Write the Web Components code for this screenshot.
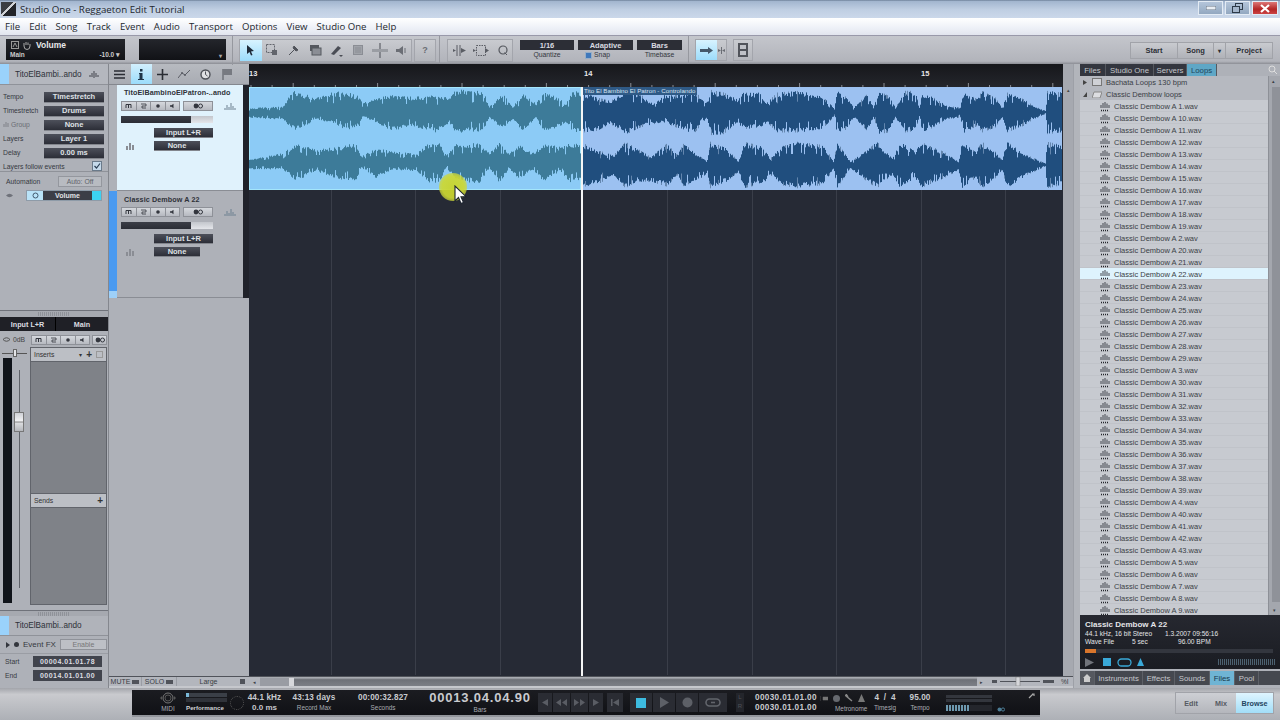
<!DOCTYPE html>
<html><head><meta charset="utf-8"><style>
html,body{margin:0;padding:0;width:1280px;height:720px;overflow:hidden;background:#aeb1b8;font-family:"Liberation Sans",sans-serif}
so-app{display:flex}
</style></head><body>
<so-app></so-app>
<script>
const F="'Liberation Sans',Arial,sans-serif", OS="'Open Sans','Liberation Sans',sans-serif";
function def(name,css,html,init){
  customElements.define(name,class extends HTMLElement{
    constructor(){super();const r=this.attachShadow({mode:'open'});
      r.innerHTML='<style>'+css+'</style>'+(typeof html==='function'?html(this):html);}
    connectedCallback(){if(init&&!this._i){this._i=1;init(this)}}
  });
}
const svg=(w,h,b,s='')=>`<svg width="${w}" height="${h}" viewBox="0 0 ${w} ${h}" style="display:block;flex:none;${s}">${b}</svg>`;

def('so-btn',`:host{display:flex;align-items:center;justify-content:center;height:var(--h,11px);width:var(--w,60px);background:linear-gradient(#4d505a,#2c2e37);color:#dfe1e6;font:bold 7.5px ${F};flex:none;box-sizing:border-box;border-bottom:1px solid #83868d}`,`<slot></slot>`);
const strip=()=>`<so-strip></so-strip>`;
def('so-strip',`:host{display:flex;height:10px;width:92px;flex:none;gap:0}
:host([mix]){width:76px}
div{box-sizing:border-box;border:1px solid #8e9198;background:linear-gradient(#d5d8dd,#b6b9c0);height:10px;width:15.5px;display:flex;align-items:center;justify-content:center;margin-right:-1px}
div.w{width:30px;margin-left:4px}
:host([mix]) div.w{width:15px;margin-left:3px}`,
`<div>${svg(7,6,'<path d="M1 5V1.5H6V5M3.5 1.5V5" fill="none" stroke="#33363e"/>')}</div>
<div>${svg(7,6,'<path d="M1 1H6V3H2V5H6" fill="none" stroke="#33363e" stroke-width=".8"/>')}</div>
<div>${svg(6,6,'<circle cx="3" cy="3" r="1.8" fill="#33363e"/>')}</div>
<div>${svg(7,6,'<path d="M1 2.2H2.5L4.5 .8V5.2L2.5 3.8H1Z" fill="#33363e"/>')}</div>
<div class="w">${svg(12,6,'<circle cx="4" cy="3" r="2.4" fill="#33363e"/><circle cx="8.5" cy="3" r="2" fill="none" stroke="#33363e"/>')}</div>`);

def('so-title',`:host{display:flex;align-items:center;height:18px;flex:none;background:linear-gradient(#6d8098 0,#a3b6cf 8%,#c0cfe3 55%,#cbd8ea);font:9.75px ${OS};color:#23272e;position:relative}
.l{width:15px;height:14px;margin:0 4px 0 1px;background:linear-gradient(135deg,#3a3d42 0 42%,#cfd2d6 42% 52%,#23252a 52%)}
.w{margin-left:auto;display:flex;gap:2px;margin-right:2px;height:15px;align-self:flex-start;padding-top:1px}
.w div{height:14px;width:25px;display:flex;align-items:center;justify-content:center;box-sizing:border-box;border:1px solid #e3ebf4}
`,`<div class="l"></div><span>Studio One - Reggaeton Edit Tutorial</span>
<div class="w"><div style="background:linear-gradient(#b4c5da,#93a8c0)">${svg(10,4,'<rect x="0" y="0" width="10" height="4" fill="#e8edf3" stroke="#6a7686"/>')}</div>
<div style="background:linear-gradient(#b4c5da,#93a8c0)">${svg(11,10,'<rect x="3.5" y=".5" width="7" height="6" fill="none" stroke="#2e3a48"/><rect x=".5" y="3.5" width="7" height="6" fill="#a5b6cb" stroke="#2e3a48"/>')}</div>
<div style="width:26px;background:linear-gradient(#d77,#b32626 60%,#c44)">${svg(10,9,'<path d="M1 1L9 8M9 1L1 8" stroke="#fff" stroke-width="2.2"/>')}</div></div>`);

def('so-menu',`:host{display:flex;align-items:center;height:17px;flex:none;background:linear-gradient(#fff,#edf0f7 60%,#e2e5ee);font:9.6px ${OS};color:#23272e;padding-left:5px;gap:9.1px;box-sizing:border-box}`,
 ['File','Edit','Song','Track','Event','Audio','Transport','Options','View','Studio One','Help'].map(t=>`<span>${t}</span>`).join(''));

const tool=(b,a='')=>`<div class="t ${a}">${b}</div>`;
def('so-toolbar',`:host{display:flex;align-items:center;height:29px;flex:none;background:linear-gradient(#c4c6cc,#b2b4bb 90%,#8b8d94);box-sizing:border-box;border-top:1px solid #99a;position:relative}
.d{background:linear-gradient(#24262c,#111216);height:21px;box-sizing:border-box;color:#e8e8ea;font:bold 7px ${F};flex:none;position:relative}
.t{width:21.5px;height:21px;display:flex;align-items:center;justify-content:center;flex:none}
.on{background:linear-gradient(#d8f3ff,#9cdcfb)}
.g{display:flex;height:23px;border:1px solid #a3a5ac;box-sizing:border-box;align-items:center;background:linear-gradient(#c9cbd0,#b4b6bc);flex:none}
.sp{width:1px;height:29px;background:#96989f;flex:none}
.q{display:flex;flex-direction:column;align-items:center;flex:none;gap:1px;margin-top:-1px}
.q b{display:flex;align-items:center;justify-content:center;height:10px;background:#2c2e36;color:#d8dae0;font:bold 7.5px ${F};box-sizing:border-box}
.q span{font:6.8px ${F};color:#33363d;height:8px;line-height:8px}
.sw{margin-left:auto;margin-right:7px;display:flex;height:17px;width:143px;background:linear-gradient(#c9cbd0,#b0b2b8);border:1px solid #a1a3a9;box-sizing:border-box;font:bold 7.5px ${F};color:#2c2f36;flex:none}
.sw div{display:flex;align-items:center;justify-content:center;border-right:1px solid #a1a3a9;box-sizing:border-box}
`,`
<div class="d" style="margin-left:6px;width:119px;margin-top:-1px"><div style="display:flex;align-items:center;height:12px;padding-left:5px;gap:3px">
 ${svg(8,8,'<rect x=".5" y=".5" width="7" height="7" fill="none" stroke="#999"/><path d="M2 6L4 2L6 6" fill="none" stroke="#999"/>')}
 ${svg(9,9,'<path d="M2 5V2M4 4V1M6 4V1.5M8 5V3M2 5Q2 8.5 5 8.5Q8 8.5 8 5" fill="none" stroke="#aaa"/>')}
 <span style="font-size:8.5px;margin-left:2px">Volume</span></div>
 <div style="display:flex;justify-content:space-between;padding:0 5px 0 4px;font-size:6.5px;color:#ccc"><span>Main</span><span>-10.0 ▾</span></div></div>
<div class="d" style="margin-left:14px;width:87px;margin-top:-1px"><span style="position:absolute;right:4px;bottom:1px;font-size:6px;color:#aaa">▾</span></div>
<div class="sp" style="margin-left:6px"></div>
<div class="g" style="margin-left:6px;width:173px;padding-right:1px">
 ${tool(svg(9,12,'<path d="M1 1L8 7L5 7.5L6.5 11L5 11.5L3.5 8L1 10Z" fill="#1f2a38"/>'),'on')}
 ${tool(svg(12,12,'<rect x=".5" y=".5" width="8" height="8" fill="none" stroke="#62656c" stroke-dasharray="2 1"/><rect x="6" y="6" width="5" height="5" fill="#62656c"/>'))}
 ${tool(svg(12,12,'<path d="M1 11L7 5M6 2L10 6L8 7L5 4Z" stroke="#50535a" fill="#50535a"/>'))}
 ${tool(svg(13,12,'<rect x="1" y="1" width="9" height="6" fill="#55585f"/><rect x="3" y="4" width="9" height="7" fill="#8b8e95" stroke="#55585f"/>'))}
 ${tool(svg(13,13,'<path d="M1 10L8 2L11 4L4 11Z" fill="#4a4d55"/><path d="M9 11L11 13L13 11Z" fill="#4a4d55"/>'))}
 ${tool(svg(10,10,'<rect x=".5" y=".5" width="9" height="9" fill="#a0a3a9" stroke="#8a8d94"/><path d="M2 3H8M2 5H8M2 7H8" stroke="#8a8d94"/>'))}
 ${tool(svg(16,15,'<path d="M8 0V15" stroke="#70737a" stroke-width="1.5"/><path d="M0 6H16V9H0Z" fill="#9a9da3"/>'))}
 ${tool(svg(11,11,'<path d="M0 4H3L7 1V10L3 7H0Z" fill="#6b6e75"/><path d="M9 3V8" stroke="#6b6e75"/>'))}
</div>
<div class="g" style="margin-left:2px;width:22px;justify-content:center;font:bold 9px ${F};color:#6a6d74">?</div>
<div class="sp" style="margin-left:3px"></div>
<div class="g" style="margin-left:7px;width:66px;padding-left:1px">
 ${tool(svg(14,11,'<path d="M4 0V11M7 0V11" stroke="#5a5d64"/><path d="M0 4L3 5.5L0 7ZM8 3L13 5.5L8 8Z" fill="#5a5d64"/>'))}
 ${tool(svg(16,11,'<rect x="3.5" y=".5" width="9" height="10" fill="none" stroke="#5a5d64" stroke-dasharray="1.5 1"/><path d="M0 4L3 5.5L0 7ZM12 3L16 5.5L12 8Z" fill="#5a5d64"/>'))}
 ${tool(svg(10,11,'<circle cx="5" cy="5" r="4" fill="none" stroke="#54575e" stroke-width="1.2"/><path d="M6.5 7.5L9 10" stroke="#54575e"/>'))}
</div>
<div class="q" style="margin-left:7px;width:54px"><b style="width:54px">1/16</b><span>Quantize</span></div>
<div class="q" style="margin-left:4px;width:55px"><b style="width:55px">Adaptive</b><span style="display:flex;align-items:center;gap:2px;margin-right:16px"><i style="display:block;width:7px;height:7px;background:#3f78bb;border:1px solid #96aec8;box-sizing:border-box"></i>Snap</span></div>
<div class="q" style="margin-left:4px;width:45px"><b style="width:45px">Bars</b><span>Timebase</span></div>
<div class="sp" style="margin-left:6px"></div>
<div class="g" style="margin-left:6px;width:32px;height:22px">
 <div style="width:21px;height:20px;background:linear-gradient(#d8f3ff,#9cdcfb);display:flex;align-items:center;justify-content:center">${svg(13,7,'<path d="M0 2H8V0L13 3.5L8 7V5H0Z" fill="#44586a"/>')}</div>
 <div style="flex:1;display:flex;justify-content:center">${svg(7,7,'<path d="M3.5 0V7" stroke="#6a6d74"/><path d="M0 2L3 3.5L0 5ZM7 2L4 3.5L7 5Z" fill="#6a6d74"/>')}</div></div>
<div class="g" style="margin-left:6px;width:20px;height:22px;justify-content:center">${svg(10,14,'<path d="M0 0H10V14H0Z" fill="#50535a"/><rect x="2" y="2" width="6" height="4" fill="#bfc1c7"/><rect x="2" y="8" width="6" height="4" fill="#bfc1c7"/>')}</div>
<div class="sw"><div style="width:47px">Start</div><div style="width:36px">Song</div><div style="width:12px;font-size:6px">▾</div><div style="flex:1;border:0">Project</div></div>
`);

def('so-inspector',`:host{display:flex;flex-direction:column;width:109px;height:624px;flex:none;background:#aeb1b8;box-sizing:border-box;border-right:1px solid #84878e;font:7px ${F};color:#363941;overflow:hidden}
.hd{height:21px;display:flex;align-items:center;background:#b4b7be;flex:none;font:8.2px ${F};color:#2e3138;border-bottom:1px solid #8f9299;box-sizing:border-box}
.hd i{display:block;width:9px;align-self:stretch;background:#9ad2fb;margin-right:6px}
.r{display:flex;align-items:center;justify-content:space-between;height:14px;padding:0 4px 0 3px;flex:none;font-size:6.8px}
.rs{padding:5px 0 0;flex:none;height:87px;box-sizing:border-box;border-bottom:1px solid #8f9299}
.rs .r>span:first-child{margin-top:-2px}
.auto{height:31px;flex:none;display:flex;flex-direction:column;padding-top:2px;box-sizing:border-box}
.sp{flex:none;height:6px;background:#a6a9b0;border-top:1px solid #6f727a;box-sizing:border-box;background-image:repeating-linear-gradient(90deg,#8f9299 0 1px,transparent 1px 2px);background-size:32px 4px;background-repeat:no-repeat;background-position:38px 1px}
.mh{display:flex;height:14px;flex:none;background:#1f2026;color:#dcdde1;font:bold 7.2px ${F}}
.mh div{display:flex;align-items:center;justify-content:center}
.mx{height:279px;flex:none;display:flex;padding-top:4px;box-sizing:border-box}
.ins{width:77px;height:258px;margin-top:2px;background:#7f8288;border:1px solid #61646b;box-sizing:border-box;display:flex;flex-direction:column}
.ih{height:13px;flex:none;background:#bcbfc5;display:flex;align-items:center;padding:0 3px;border-bottom:1px solid #61646b;font-size:6.8px;color:#333}
.fld{display:flex;width:69px;height:11px;background:#41444d;color:#dcdde1;font:bold 7px ${F};align-items:center;justify-content:center;letter-spacing:.45px;margin-right:2px}
`,()=>`
<div class="hd"><i></i>TitoElBambi..ando<span style="margin-left:auto;margin-right:9px">${svg(10,7,'<path d="M1 4V6M3 2V6M5 0V7M7 2V6M9 4V6" stroke="#42454c"/>')}</span></div>
<div class="rs">
 <div class="r"><span>Tempo</span><so-btn>Timestretch</so-btn></div>
 <div class="r"><span>Timestretch</span><so-btn>Drums</so-btn></div>
 <div class="r"><span style="color:#6a6d74;display:flex;align-items:center;gap:2px">${svg(6,5,'<path d="M1 2V5M3 0V5M5 1V5" stroke="#8a8d94" stroke-width="1.3"/>')}Group</span><so-btn>None</so-btn></div>
 <div class="r"><span>Layers</span><so-btn>Layer 1</so-btn></div>
 <div class="r"><span>Delay</span><so-btn>0.00 ms</so-btn></div>
 <div class="r" style="padding-right:6px;margin-top:-1px"><span style="margin-top:0">Layers follow events</span><span style="display:block;width:10px;height:10px;background:#c5d9ea;border:1px solid #6a7a8a;box-sizing:border-box">${svg(8,8,'<path d="M1.5 4L3.5 6L7 1.5" fill="none" stroke="#2b3f55" stroke-width="1.2"/>')}</span></div>
</div>
<div class="auto">
 <div class="r" style="padding:0 6px 0 6px"><span>Automation</span><span style="display:flex;width:44px;height:11px;align-items:center;justify-content:center;border:1px solid #94979e;background:#b8bbc1;box-sizing:border-box;color:#60636a">Auto: Off</span></div>
 <div style="display:flex;align-items:center;margin-top:2px;padding-left:6px;height:11px">
  ${svg(7,5,'<path d="M0 2.5Q3.5 -1 7 2.5Q3.5 6 0 2.5Z" fill="#6f727a"/>')}
  <span style="display:flex;margin-left:13px;width:76px;height:11px;border:1px solid #8e9ba8;box-sizing:border-box">
   <i style="display:flex;align-items:center;justify-content:center;width:16px;background:#b9e3f8">${svg(7,7,'<circle cx="3.5" cy="3.5" r="2.5" fill="none" stroke="#41596d"/>')}</i>
   <b style="flex:1;background:#3b3e47;color:#e1e3e7;text-align:center;font-size:7px;line-height:9px">Volume</b>
   <i style="width:9px;background:#3cd2f2"></i></span></div>
</div>
<div style="flex:1"></div>
<div class="sp" style="height:7px"></div>
<div class="mh"><div style="width:55px;border-right:1px solid #000">Input L+R</div><div style="flex:1">Main</div></div>
<div class="mx">
 <div style="width:31px;flex:none;display:flex;flex-direction:column;padding-left:2px;box-sizing:border-box">
  <div style="display:flex;align-items:center;gap:3px;height:8px;font-size:6.8px;color:#444;padding-left:1px">${svg(7,5,'<path d="M0 2.5Q3.5 -1 7 2.5Q3.5 6 0 2.5Z" fill="none" stroke="#555"/>')}<span>0dB</span></div>
  <div style="height:1px;width:25px;background:#555;margin:10px 0 0 0;position:relative"><i style="position:absolute;left:11px;top:-4px;width:4px;height:8px;background:#e4e5e8;border:1px solid #666;box-sizing:border-box"></i></div>
  <div style="display:flex;margin-top:4px;height:245px">
   <div style="width:9px;background:#10141a;margin-left:1px"></div>
   <div style="width:7px"></div>
   <div style="width:1px;background:#5e6168;height:218px;margin-top:12px;position:relative"><i style="position:absolute;left:-5px;top:42px;width:10px;height:20px;background:linear-gradient(#cfd1d6,#f2f2f4 45%,#777 50%,#dcdde0 55%,#b4b6bb);border:1px solid #777;box-sizing:border-box"></i></div>
  </div>
 </div>
 <div style="width:77px;flex:none;margin-left:-1px">
  <so-strip mix style="margin-left:1px"></so-strip>
  <div class="ins"><div class="ih"><span>Inserts</span><span style="margin-left:auto;font-size:6px">▾</span><b style="margin-left:4px;font-size:10px;line-height:8px">+</b><span style="margin-left:4px;width:5px;height:5px;border:1px solid #999"></span></div>
   <div style="height:131px;flex:none"></div>
   <div class="ih" style="border-top:1px solid #61646b;height:13px"><span>Sends</span><b style="margin-left:auto;font-size:10px;line-height:8px">+</b></div>
  </div>
 </div>
</div>
<div class="sp"></div>
<div class="hd" style="height:20px;background:#b0b3ba"><i></i>TitoElBambi..ando</div>
<div style="height:18px;display:flex;align-items:center;padding-left:6px;font:8px ${F};flex:none;border-bottom:1px solid #9a9da4;box-sizing:border-box">
 ${svg(4,6,'<path d="M0 0L4 3L0 6Z" fill="#33363d"/>')}
 <span style="display:block;width:5px;height:5px;border-radius:50%;background:#33363d;margin:0 4px"></span>Event FX
 <span style="display:flex;width:47px;height:11px;align-items:center;justify-content:center;border:1px solid #8f9299;box-sizing:border-box;margin-left:4px;font-size:7px;color:#777;background:#bdc0c6">Enable</span></div>
<div class="r"><span style="padding-left:2px">Start</span><span class="fld">00004.01.01.78</span></div>
<div class="r"><span style="padding-left:2px">End</span><span class="fld">00014.01.01.00</span></div>
<div style="height:6px;flex:none"></div>
`);

def('so-track',`:host{display:flex;flex-direction:column;height:106px;box-sizing:border-box;padding:var(--pt,4px) 0 0 4px;font:bold 7.2px ${F};color:#2f3239;background:var(--bg,#aeb1b8);border-bottom:1px solid #8a8d94}
.m{height:7px;margin:5px 0 5px 0;width:92px;background:linear-gradient(#c3c6cc,#e4e6ea);position:relative}
.m i{display:block;height:100%;width:70px;background:linear-gradient(#3b3e47,#2b2d35)}
`,t=>`<div style="height:9px;padding-left:3px;letter-spacing:.1px"><slot></slot></div>
<div style="display:flex;align-items:center;margin-top:var(--sm,3px);width:115px;justify-content:space-between">${strip()}${svg(12,9,'<path d="M1 6V8M3 3V8M5 5V8M7 1V8M9 4V8M11 6V8" stroke="#6d8090"/>')}</div>
<div class="m"><i></i></div>
<div style="margin-left:33px"><so-btn style="--w:59px;--h:10px">Input L+R</so-btn></div>
<div style="display:flex;align-items:center;margin-top:3px">
  ${svg(8,8,'<path d="M1 4V8M4 1V8M7 3V8" stroke="#8a8d94" stroke-width="2"/>',"margin:0 20px 0 5px")}
  <so-btn style="--w:46px;--h:10px">None</so-btn></div>`);

def('so-tracklist',`:host{display:flex;flex-direction:column;width:140px;flex:none;background:#aeb1b8;box-sizing:border-box}
.h{height:21px;flex:none;display:flex;align-items:center;background:linear-gradient(#b7bac0,#a9acb3);border-bottom:1px solid #84878e;box-sizing:border-box}
.h div{width:21.5px;height:100%;display:flex;align-items:center;justify-content:center;flex:none}
.b{display:flex;flex-direction:column;height:213px;flex:none}
.row{display:flex;flex:none}
.c{width:8px;flex:none}.e{width:6px;background:#20222a;flex:none}
`,`<div class="h">
 <div>${svg(11,9,'<path d="M0 1H11M0 4.5H11M0 8H11" stroke="#2a2d34" stroke-width="1.3"/>')}</div>
 <div style="background:linear-gradient(#d2effd,#9bdcfb)">${svg(6,11,'<rect x="2" y="0" width="2.5" height="2.5" fill="#1f3548"/><path d="M1 4H4.5V10H6V11H0V10H1.5V5H1Z" fill="#1f3548"/>')}</div>
 <div>${svg(11,11,'<path d="M5.5 0V11M0 5.5H11" stroke="#2a2d34" stroke-width="1.6"/>')}</div>
 <div>${svg(13,11,'<path d="M0 9L4 4L7 6L12 1" fill="none" stroke="#5a5d64"/><circle cx="4" cy="4" r="1" fill="#5a5d64"/><circle cx="7" cy="6" r="1" fill="#5a5d64"/>')}</div>
 <div>${svg(11,11,'<circle cx="5.5" cy="5.5" r="4.5" fill="#dfe0e3" stroke="#4d5057" stroke-width="1.4"/><path d="M5.5 2.5V5.5L7.5 7" stroke="#4d5057" fill="none"/>')}</div>
 <div>${svg(10,11,'<path d="M1 0V11" stroke="#6b6e75" stroke-width="1.4"/><rect x="1" y="0" width="9" height="6" fill="#777a81"/>')}</div>
</div>
<div class="b">
 <div class="row" style="height:106px"><div class="c" style="background:#aeb1b8"></div><so-track style="--bg:#e0f2fc;--pt:3px;--sm:4px;width:126px">TitoElBambinoElPatron-..ando</so-track><div class="e"></div></div>
 <div class="row" style="height:107px"><div class="c" style="background:#4a9af0;display:flex;align-items:flex-end"><span style="display:block;width:8px;height:7px;background:#9ed0f8"></span></div><so-track style="width:126px;height:107px">Classic Dembow A 22</so-track><div class="e"></div></div>
</div>`);

def('so-wave',`:host{display:block;height:103px;overflow:hidden}svg{display:block}`,'<span id="o"></span>',el=>{
  const w=+el.getAttribute('w'),off=+el.getAttribute('off')||0,cs=el.getAttribute('cs').split(' ').map(Number);
  const chans=el.getAttribute('env').split('|').map(c=>c.trim().split(/\s+/).map(s=>s.split(':').map(Number)));
  const c2=el.getAttribute('c2');
  let seed=+el.getAttribute('seed')||7;const rnd=()=>(seed=(seed*16807)%2147483647)/2147483647;
  const amp=(env,px,j)=>{let i=0;while(i<env.length-2&&env[i+1][0]<px)i++;const a=env[i],b=env[i+1],t=Math.max(0,Math.min(1,(px-a[0])/(b[0]-a[0])));return (a[j]+(b[j]-a[j])*t)/3};
  const spk=+el.getAttribute('spk')||.08;
  let p='',q='';
  chans.forEach((env,ci)=>{const c=cs[ci];for(let x=0;x<w;x++){
    const px=x*3+off,u=amp(env,px,1),d=amp(env,px,2);
    const drop=rnd()<spk?.6:1,drop2=rnd()<spk?.6:1;
    const up=u*(.74+rnd()*.26)*drop,dn=d*(.74+rnd()*.26)*drop2;
    p+=`M${x+.5} ${(c-up).toFixed(1)}V${(c+dn).toFixed(1)}`;
    if(c2&&rnd()<.18)q+=`M${x+.5} ${(c-u).toFixed(1)}V${(c+d).toFixed(1)}`;
  }});
  el.shadowRoot.getElementById('o').innerHTML=`<svg width="${w}" height="103">${q?`<path d="${q}" stroke="${c2}" fill="none"/>`:''}<path d="${p}" stroke="${el.getAttribute('c')}" stroke-width="1" fill="none"/></svg>`;
});

const ticks=()=>{let s='';for(let i=0;i<40;i++){const x=2+i*21.1;const big=i%4==2;s+=`<path d="M${x} ${big?19:21}V23" stroke="#8a8d94"/>`;}return s};
const gl=()=>{let s='';[82,166,251,418,503,587,672,756].forEach(x=>s+=`<path d="M${x}.5 0V485" stroke="#3a3e49"/>`);return s};
def('so-arrange',`:host{display:block;width:814px;flex:none;background:#262a35;position:relative;overflow:hidden}
.ru{height:23px;background:linear-gradient(#16171b,#24262c);position:relative;color:#e6e6e8;font:bold 7.5px ${F};overflow:hidden}
.ru span{position:absolute;top:5px}
.cl{display:flex;height:103px}
.s{background:#8ccbf6;width:332px;flex:none;box-shadow:inset 0 0 0 1px #a4e6fb}
.u{background:#9cc1f1;flex:1;margin:0 1px 0 2px;position:relative}
.lb{position:absolute;left:0;top:0;height:8px;background:#2f5a86;color:#d8e4f2;font:6.2px/8px ${F};padding:0 2px 0 1px;letter-spacing:.04px;white-space:nowrap}
.ph{position:absolute;left:332px;top:23px;bottom:0;width:1.5px;background:#f4f5f6}
.cur{position:absolute;left:190px;top:109px}
`,`<div class="ru">${svg(814,23,ticks(),'position:absolute;left:0;top:0')}<span style="left:0">13</span><span style="left:335px">14</span><span style="left:672px">15</span></div>
<div class="cl">
 <div class="s"><so-wave w="332" c="#3d7b99" seed="11" off="0" cs="26 76" spk=".12" env="0:15:15 100:20:20 130:70:50 150:60:50 200:50:20 250:65:30 290:65:55 330:50:40 340:30:10 380:50:30 430:55:55 480:50:40 560:55:60 600:50:30 620:70:60 700:70:55 720:20:15 760:60:50 790:20:20 820:60:55 860:30:15 885:65:60 920:50:45 950:30:30 970:65:55 996:65:60|0:10:20 100:30:20 140:60:55 200:40:25 270:50:50 320:60:55 335:20:15 380:45:45 430:35:20 500:30:25 540:60:60 570:60:60 590:30:15 620:60:50 690:60:65 720:30:15 750:60:60 780:30:20 810:55:50 850:30:20 885:60:60 930:50:25 965:60:60 996:60:50"></so-wave></div>
 <div class="u"><so-wave w="479" c="#204e7e" c2="#6386ae" seed="29" off="9" cs="25.5 78" spk=".1" env="10:60:60 50:45:55 90:35:35 140:65:65 180:55:45 220:25:35 250:55:30 300:55:50 340:65:65 380:30:15 392:68:68 430:60:65 470:40:30 490:60:50 540:60:45 560:30:30 590:60:60 650:65:60 720:55:55 750:25:25 762:10:10 770:65:65 800:45:50 820:15:15 860:55:55 880:15:15 895:65:65 925:50:60 945:15:15 975:65:60 1005:65:55 1018:10:10 1025:60:60 1060:45:45 1100:20:20 1140:15:15 1150:65:65 1190:40:40 1205:65:60 1245:45:45 1265:15:15 1280:60:60 1330:40:40 1360:20:20 1395:5:5 1400:65:65 1446:60:60|10:65:65 50:45:60 100:30:30 135:70:70 170:50:50 210:25:50 260:65:65 290:30:30 310:65:65 380:10:30 390:70:70 440:50:50 475:10:20 490:70:70 550:55:55 570:20:30 600:55:60 650:70:70 730:60:60 760:10:10 770:70:70 810:10:10 860:45:50 890:70:70 935:20:30 960:70:70 1005:40:40 1020:70:70 1090:40:40 1135:10:15 1145:70:70 1185:40:40 1205:70:70 1245:40:40 1265:15:15 1280:70:70 1340:30:30 1395:5:5 1400:70:70 1446:60:60"></so-wave>
 <div class="lb">Tito El Bambino El Patron - Controlando</div></div>
</div>
<div style="height:485px">${svg(814,485,gl())}</div>
<div class="ph"></div>
<div class="cur"><div style="width:28px;height:28px;border-radius:50%;background:radial-gradient(rgba(200,212,44,.95) 0,rgba(205,216,50,.92) 55%,rgba(205,216,60,.65) 75%,rgba(205,216,60,0) 100%)"></div></div>
<div class="cur" style="left:205px;top:121px">${svg(13,20,'<path d="M1 1V16L4.5 12.5L7 18.5L9.5 17.5L7 11.7H12Z" fill="#fff" stroke="#1d2430" stroke-width="1.1"/>')}</div>
`);

def('so-bottomstrip',`:host{display:flex;height:12px;flex:none;background:#b3b6bd;border-top:1px solid #50535a;border-bottom:2px solid #c6c8cd;box-sizing:border-box;align-items:center;font:7px ${F};color:#3a3d44}
.c{display:flex;align-items:center;height:100%;justify-content:center;gap:2px;box-sizing:border-box;border-right:1px solid #9a9da4}
i{display:block;width:7px;height:4px;background:#50535a}
.sb{width:738px;height:100%;display:flex;align-items:center;background:linear-gradient(#a8abb1 0 10%,#6e7178 30%,#7c7f86)}
.a{flex:none;height:100%;background:#b3b6bd;font-size:5px;display:flex;align-items:center;justify-content:center}
.z{flex:1;display:flex;align-items:center;height:100%;padding-left:6px}
`,`<div class="c" style="width:33px">MUTE<i></i></div><div class="c" style="width:35px">SOLO<i></i></div><div class="c" style="width:63px;border:0">Large</div><i style="width:5px;height:5px"></i><span style="width:3px"></span>
<div class="sb"><span class="a" style="width:12px">◂</span><span style="width:34px;height:8px;flex:none;background:linear-gradient(90deg,#999ca3 85%,#d7d8dc 85%)"></span><span style="flex:1"></span><span class="a" style="width:9px">▸</span></div>
<div class="z">${svg(68,9,'<rect x="0" y="3" width="5" height="3" fill="#50535a"/><path d="M8 4.5H48" stroke="#50535a"/><rect x="24" y="0" width="4" height="9" fill="#d5d6da" stroke="#777" stroke-width=".5"/><rect x="51" y="3" width="11" height="3" fill="#50535a"/>')}<span style="font-size:6.5px;margin-left:1px">%I</span></div>`);

def('so-browser',`:host{display:flex;flex-direction:column;width:200px;height:624px;flex:none;font:7.5px ${F};color:#3a3e46;background:#aeb1b8}
.t{display:flex;height:12px;flex:none;background:#aeb1b8}
.t span{background:#33363f;color:#c5c7cc;display:flex;align-items:center;justify-content:center;height:100%;border-right:1px solid #55585f;box-sizing:border-box;font-size:7.8px}
.l{height:539px;display:flex;flex:none;overflow:hidden}
.rows{flex:1;background:#b6b9c0;overflow:hidden}
.r{height:12px;display:flex;align-items:center;white-space:nowrap}
.f{padding-left:20px;background:#c7cad0;box-shadow:inset 0 -1px 0 #c0c3c9}
.f.sel{background:#def3fd}
.sc{width:12px;flex:none;background:#a4a7ae;border-left:1px solid #8d9097;box-sizing:border-box;position:relative}
.p{height:54px;flex:none;background:linear-gradient(#262830,#1a1c22);color:#e4e5e8;font:7px ${F};padding:5px 5px 0;box-sizing:border-box}
.pt{display:flex;height:14px;flex:none;background:#45484f;color:#c5c7cc;font:7.8px ${F};align-items:center}
.pt span{height:100%;display:flex;align-items:center;justify-content:center;border-right:1px solid #5d6067;box-sizing:border-box}
`,()=>{
 const ns=[1,10,11,12,13,14,15,16,17,18,19,2,20,21,22,23,24,25,26,27,28,29,3,30,31,32,33,34,35,36,37,38,39,4,40,41,42,43,5,6,7,8,9];
 const ic=svg(10,11,'<path d="M1 7V4M3 7V2M5 7V1M7 7V2.5M9 7V4" stroke="#454850"/><path d="M1 9.5H9" stroke="#23252b" stroke-width="1.4" stroke-dasharray="1 1"/>','margin-right:4px');
 return `<div class="t"><span style="width:26px">Files</span><span style="width:48px">Studio One</span><span style="width:33px">Servers</span><span style="width:30px;background:#5fa7c6;color:#21465c">Loops</span><span style="flex:1;background:transparent;border:0;justify-content:flex-end;padding-right:2px">${svg(10,10,'<circle cx="4" cy="4" r="3" fill="none" stroke="#ddd"/><path d="M6 6L9 9" stroke="#ddd"/>')}</span></div>
 <div class="l"><div class="rows">
  <div class="r" style="background:#b6b9c0;padding-left:3px">${svg(4,5,'<path d="M0 0L4 2.5L0 5Z" fill="#444"/>','margin-right:5px')}${svg(10,8,'<rect x=".5" y=".5" width="9" height="7" fill="#cfd1d6" stroke="#777"/>','margin-right:4px')}Bachata Loops 130 bpm</div>
  <div class="r" style="background:#b6b9c0;padding-left:3px">${svg(4,5,'<path d="M4 0V5H0Z" fill="#444"/>','margin-right:5px')}${svg(10,8,'<path d="M0 8L2 2H10L8 8Z" fill="#dcdde1" stroke="#888"/>','margin-right:4px')}Classic Dembow loops</div>
  ${ns.map(n=>`<div class="r f${n==22?' sel':''}">${ic}Classic Dembow A ${n}.wav</div>`).join('')}
 </div><div class="sc"><span style="position:absolute;left:3px;top:2px;font-size:5px">▴</span><span style="position:absolute;left:3px;top:11px;width:8px;height:515px;background:#8f9299"></span><span style="position:absolute;left:4px;bottom:2px;font-size:5px">▾</span></div></div>
 <div class="p"><div style="font:bold 8px ${F};margin-bottom:1px">Classic Dembow A 22</div>
  <div style="display:flex;height:8px;line-height:8px;font-size:6.6px"><span style="width:80px">44.1 kHz, 16 bit Stereo</span><span>1.3.2007 09:56:16</span></div>
  <div style="display:flex;height:8px;line-height:8px;font-size:6.6px"><span style="width:47px">Wave File</span><span style="width:46px">5 sec</span><span>96.00 BPM</span></div>
  <div style="height:4px;background:#33363e;margin:3px 0 4px;width:188px"><i style="display:block;width:11px;height:4px;background:#d9762c"></i></div>
  <div style="display:flex;align-items:center;height:10px">${svg(9,9,'<path d="M0 0L9 4.5L0 9Z" fill="#70737a"/>','margin-right:9px')}${svg(8,8,'<rect width="8" height="8" fill="#3aa9d8"/>','margin-right:6px')}${svg(15,9,'<rect x="1" y="1" width="13" height="7" rx="3.5" fill="none" stroke="#3aa9d8" stroke-width="1.3"/>','margin-right:5px')}${svg(7,8,'<path d="M3.5 0L7 8H0Z" fill="#3aa9d8"/>')}<span style="margin-left:auto;width:57px;height:6px;background:repeating-linear-gradient(90deg,#4c6170 0 1px,#1d1f25 1px 2px)"></span></div>
 </div>
 <div style="height:2px;background:#aeb1b8;flex:none"></div>
 <div class="pt"><span style="width:15px;background:#55585f">${svg(8,8,'<path d="M4 0L8 4H7V8H1V4H0Z" fill="#ccc"/>')}</span><span style="width:48px">Instruments</span><span style="width:32px">Effects</span><span style="width:35px">Sounds</span><span style="width:25px;background:#6fb4d4;color:#17384a">Files</span><span style="width:24px">Pool</span><span style="flex:1;border:0"></span></div>`
});

const tc=(w,a,b,s='')=>`<div style="width:${w}px;display:flex;flex-direction:column;align-items:center;flex:none;${s}"><b class="v">${a}</b><span class="l">${b}</span></div>`;
const tb=(w,i,bg='#2a2c33')=>`<div style="width:${w}px;height:19px;background:${bg};display:flex;align-items:center;justify-content:center;flex:none;margin-right:1px">${i}</div>`;
def('so-transport',`:host{display:flex;flex:none;height:32px;background:linear-gradient(#a3a5ab,#c9cace 20%,#adb0b6);align-items:flex-start;position:relative}
.bar{display:flex;align-items:center;margin:2px 0 0 132px;width:908px;height:25px;background:linear-gradient(#1b1c21,#101115);color:#d2d4d8;font:7px ${F};box-shadow:0 2px 0 #92959b;flex:none;overflow:hidden}
.v{font:bold 8.2px/10px ${F};white-space:nowrap;letter-spacing:.1px;color:#c9cbcf}.l{font:6.4px/9px ${F};color:#a9acb2;white-space:nowrap}
.sw{display:flex;height:22px;width:99px;background:linear-gradient(#cdcfd4,#b4b6bc);border:1px solid #a1a3a9;box-sizing:border-box;font:bold 7.2px ${F};color:#555a62;flex:none}
.sw div{display:flex;align-items:center;justify-content:center}
`,`<div class="bar">
 <div style="width:23px"></div>
 <div style="width:26px;display:flex;flex-direction:column;align-items:center;flex:none">${svg(16,12,'<circle cx="8" cy="6" r="5" fill="none" stroke="#777"/><circle cx="8" cy="6" r="3" fill="none" stroke="#555"/><path d="M0 6L2 4V8ZM16 6L14 4V8Z" fill="#555"/>')}<span class="l" style="line-height:8px;margin-top:1px">MIDI</span></div>
 <div style="width:44px;margin-left:5px;flex:none"><div style="height:4px;background:#3a3f47;width:41px;margin-bottom:1px"><i style="display:block;width:3px;height:4px;background:#7ab9d8"></i></div><div style="height:4px;background:#30333a;width:41px;margin-bottom:1px"></div><span class="l" style="color:#d0d2d6;font-weight:bold;line-height:9px;font-size:6.2px">Performance</span></div>
 <div style="width:12px;height:12px;border-radius:50%;border:1px dotted #555;margin-left:0;flex:none"></div>
 ${tc(41,'44.1 kHz','<span style="font:bold 8px '+F+';color:#c6c8cc">0.0 ms</span>')}
 ${tc(58,'43:13 days','Record Max')}
 ${tc(62,'00:00:32.827','Seconds','margin-left:9px')}
 <div style="width:112px;display:flex;flex-direction:column;align-items:center;flex:none;margin-left:10px"><b style="font:bold 13px/14px ${F};letter-spacing:.8px;color:#c9cbcf;white-space:nowrap">00013.04.04.90</b><span class="l">Bars</span></div>
 <div style="display:flex;margin-left:2px;align-items:center">
 ${tb(14,svg(6,7,'<path d="M6 0L0 3.5L6 7Z" fill="#5a5d64"/>'))}${tb(17,svg(11,7,'<path d="M5 0L0 3.5L5 7ZM11 0L6 3.5L11 7Z" fill="#5a5d64"/>'))}${tb(17,svg(11,7,'<path d="M0 0L5 3.5L0 7ZM6 0L11 3.5L6 7Z" fill="#5a5d64"/>'))}${tb(14,svg(6,7,'<path d="M0 0L6 3.5L0 7Z" fill="#5a5d64"/>'))}
 <span style="width:3px"></span>${tb(16,svg(8,7,'<path d="M0 0H1.5V7H0ZM8 0L2 3.5L8 7Z" fill="#5a5d64"/>'))}
 <span style="width:6px"></span>${tb(22,svg(10,10,'<rect width="10" height="10" fill="#3dbbe0"/>'))}${tb(22,svg(9,11,'<path d="M0 0L9 5.5L0 11Z" fill="#5d6067"/>'))}${tb(22,svg(11,11,'<circle cx="5.5" cy="5.5" r="5" fill="#5d6067"/>'))}${tb(28,svg(16,9,'<rect x="1" y="1" width="14" height="7" rx="3.5" fill="none" stroke="#62656c" stroke-width="1.6"/><path d="M6 4.5H10" stroke="#62656c" stroke-width="1.6"/>'))}
 </div>
 <div style="width:8px;height:19px;background:#23252b;margin-left:8px;font:6px/9px ${F};color:#4e5158;text-align:center;flex:none">L<br>R</div>
 <div style="margin-left:11px;display:flex;flex-direction:column;flex:none;width:62px"><b class="v" style="letter-spacing:.35px">00030.01.01.00</b><b class="v" style="letter-spacing:.35px">00030.01.01.00</b></div>
 <div style="margin-left:3px;width:47px;flex:none;display:flex;flex-direction:column"><div style="display:flex;align-items:center;gap:5px;height:12px">${svg(8,5,'<path d="M0 0V5M3 1H8V4H3Z" fill="#777" stroke="#777" stroke-width=".5"/>')}${svg(7,7,'<circle cx="3.5" cy="3.5" r="3.5" fill="#66696f"/>')}${svg(8,8,'<path d="M0 1L7 7M3 3L1 0" stroke="#888" stroke-width="1.4"/>')}${svg(7,8,'<path d="M3.5 0L7 8H0Z" fill="#777"/>')}</div><span class="l" style="margin-left:15px;line-height:9px">Metronome</span></div>
 ${tc(26,'4 &nbsp;/ &nbsp;4','Timesig','margin-left:5px')}
 ${tc(28,'95.00','Tempo','margin-left:8px')}
 <div style="margin-left:12px;width:46px;flex:none"><div style="height:3px;background:#33363d;margin-bottom:1px"></div><div style="height:3px;background:#33363d;margin-bottom:3px"></div><div style="height:6px;background:linear-gradient(90deg,transparent 53%,#24262c 53%),repeating-linear-gradient(90deg,#6d99b0 0 2px,#1b1d22 2px 3px)"></div></div>
 <div style="flex:1;position:relative;align-self:stretch"><span style="position:absolute;left:5px;bottom:3px">${svg(8,5,'<circle cx="2.5" cy="2.5" r="2" fill="#4c7c94"/><circle cx="6" cy="2.5" r="1.6" fill="none" stroke="#4c7c94"/>')}</span><span style="position:absolute;right:5px;top:3px">${svg(7,6,'<path d="M1 5L5 1M4 1H6V3" stroke="#aaa" stroke-width="1.2" fill="none"/>')}</span></div>
</div>
<div class="sw" style="margin:4px 0 0 135px"><div style="width:30px">Edit</div><div style="width:30px">Mix</div><div style="flex:1;background:linear-gradient(#dff5ff,#a2def8);color:#1f4560">Browse</div></div>`);

def('so-app',`:host{display:flex;flex-direction:column;width:1280px;height:720px;overflow:hidden}
.m{display:flex;height:624px;flex:none;background:#aeb1b8}
.c{display:flex;flex-direction:column;width:964px;flex:none}
.t{display:flex;flex:1;min-height:0}
.v{width:10px;flex:none;background:#a6a9b0;box-sizing:border-box;font:5px Arial;color:#444;text-align:center;padding-top:23px}
.sp{width:7px;flex:none;background:#b2b5bb;border-left:1px solid #9da0a7;box-sizing:border-box}
`,`<so-title></so-title><so-menu></so-menu><so-toolbar></so-toolbar>
<div class="m"><so-inspector></so-inspector>
<div class="c"><div class="t"><so-tracklist></so-tracklist><so-arrange></so-arrange><div class="v">▴</div></div><so-bottomstrip></so-bottomstrip></div>
<div class="sp"></div><so-browser></so-browser></div>
<so-transport></so-transport>`);
</script></body></html>
